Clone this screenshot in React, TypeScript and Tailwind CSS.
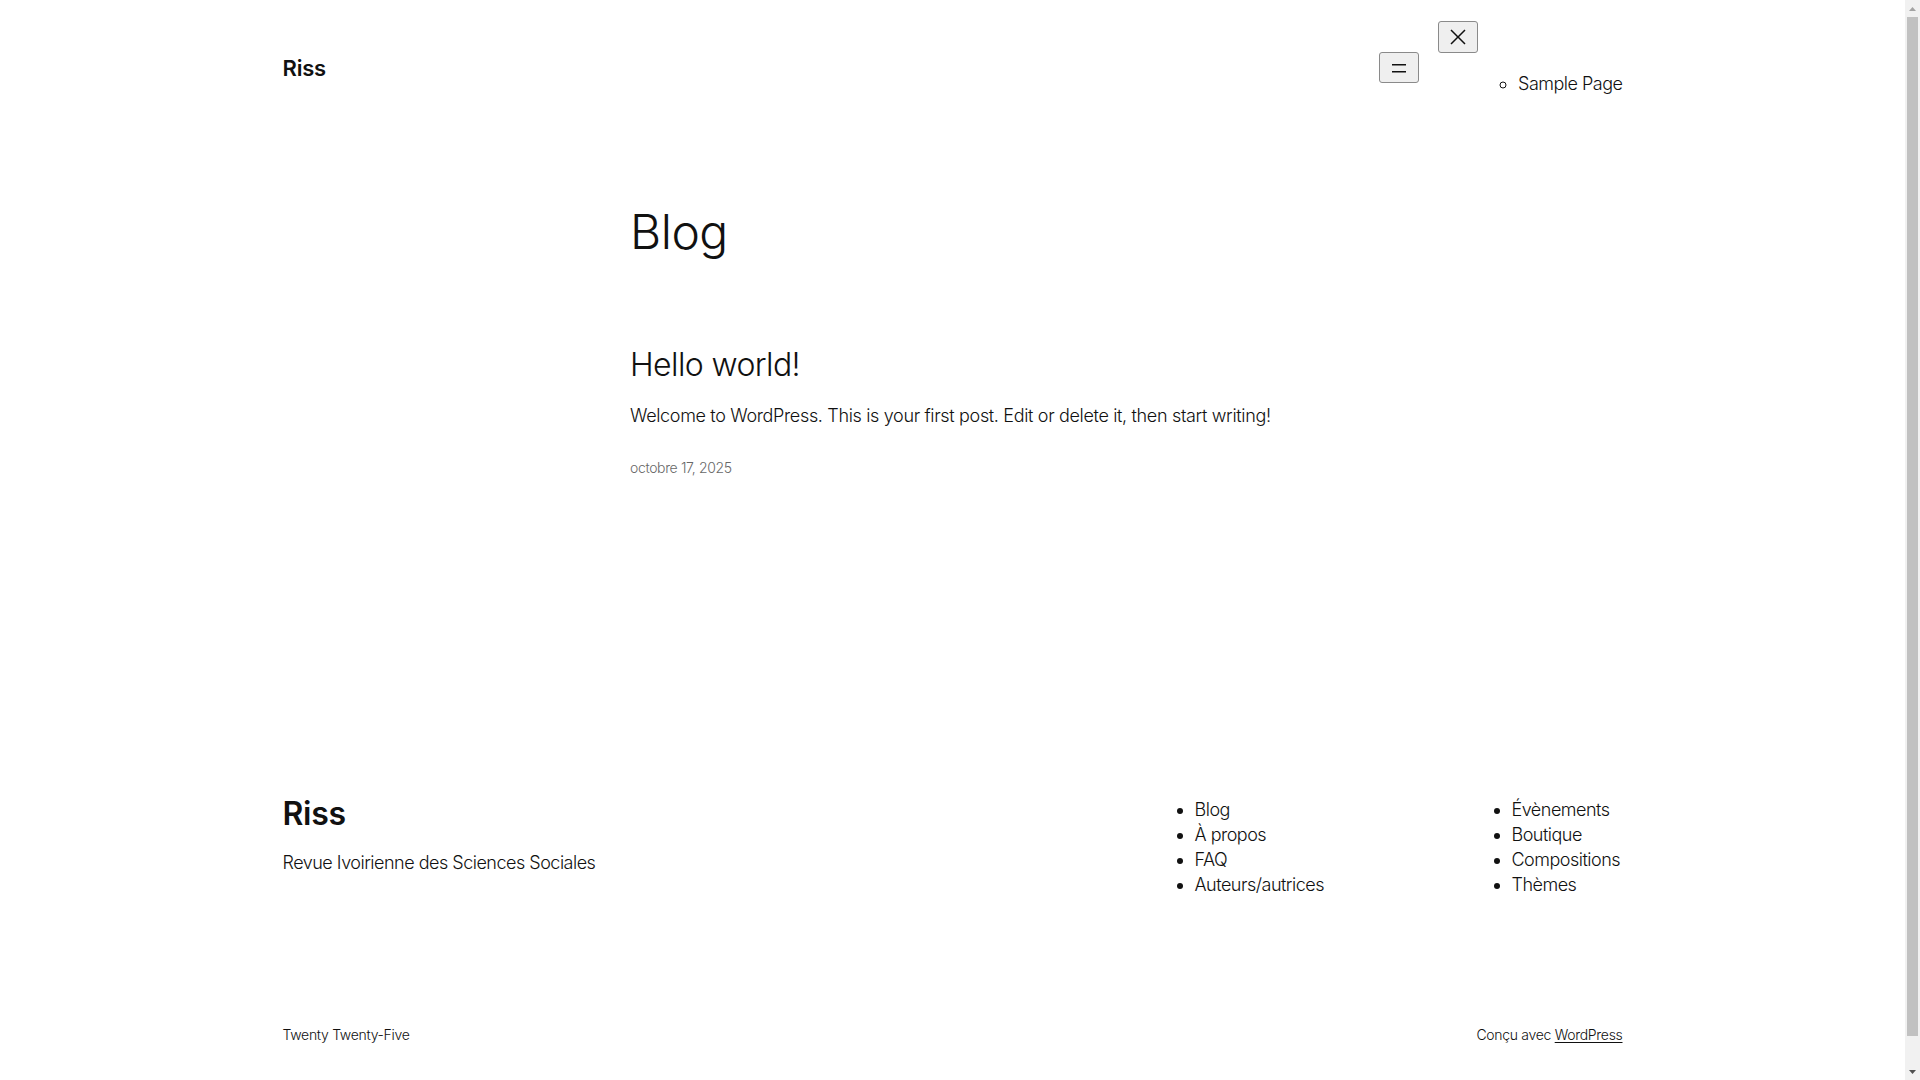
import React from "react";

function MenuIcon() {
  return (
    <svg width="24" height="24" viewBox="0 0 24 24" aria-hidden="true">
      <path d="M5 15h14v1.5H5zm0-7h14v1.5H5z" fill="currentColor" />
    </svg>
  );
}

function CloseIcon() {
  return (
    <svg width="24" height="24" viewBox="0 0 24 24" aria-hidden="true">
      <path
        d="m13.06 12 6.47-6.47-1.06-1.06L12 10.94 5.53 4.47 4.47 5.53 10.94 12l-6.47 6.47 1.06 1.06L12 13.06l6.47 6.47 1.06-1.06L13.06 12Z"
        fill="currentColor"
      />
    </svg>
  );
}

// the browser's classic scrollbar, as seen in the screenshot
function ScrollBar() {
  return (
    <div className="fixed top-0 right-0 h-screen w-[15px] bg-[#f1f1f1] flex flex-col">
      <div className="h-[17px] flex items-center justify-center">
        <svg width="7" height="4" viewBox="0 0 7 4" aria-hidden="true">
          <path d="M3.5 0 7 4H0z" fill="#a3a3a3" />
        </svg>
      </div>
      <div className="flex-1 px-[2px]">
        <div className="h-[1019px] bg-[#c1c1c1]" />
      </div>
      <div className="h-[17px] flex items-center justify-center">
        <svg width="7" height="4" viewBox="0 0 7 4" aria-hidden="true">
          <path d="M0 0h7L3.5 4z" fill="#505050" />
        </svg>
      </div>
    </div>
  );
}

const leftMenu = ["Blog", "À propos", "FAQ", "Auteurs/autrices"];
const rightMenu = ["Évènements", "Boutique", "Compositions", "Thèmes"];

export default function App() {
  return (
    <div className="min-h-[1109px] pr-[15px] bg-white text-[#111111] font-['Inter','Liberation_Sans',sans-serif]">
      {/* header */}
      <header className="max-w-[1340px] mx-auto pt-[21px] flex justify-between items-center">
        <a href="#" className="text-[22px] leading-[30px] font-semibold tracking-[-0.2px]">
          Riss
        </a>
        <nav className="flex items-center gap-[19px]">
          <button
            aria-label="Ouvrir le menu"
            className="w-[40px] h-[31px] flex items-center justify-center bg-[#efefef] border border-[#8a8a8a] rounded-[3px] text-[#111]"
          >
            <MenuIcon />
          </button>
          <div className="flex flex-col items-start">
            <button
              aria-label="Fermer le menu"
              className="w-[40px] h-[32px] flex items-center justify-center bg-[#efefef] border border-[#8a8a8a] rounded-[3px] text-[#111]"
            >
              <CloseIcon />
            </button>
            <ul className="my-[18px] ml-10 pl-10 list-[circle] text-[18px] leading-[25px] font-light tracking-[-0.5px]">
              <li>
                <a href="#">Sample Page</a>
              </li>
            </ul>
          </div>
        </nav>
      </header>

      {/* main */}
      <main className="w-[645px] mx-auto">
        <h1 className="mt-[94px] text-[48px] leading-[48px] font-light tracking-[-0.5px]">Blog</h1>
        <h2 className="mt-[90px] text-[32px] leading-[38px] font-light tracking-[-0.6px]">
          <a href="#">Hello world!</a>
        </h2>
        <p className="mt-[19px] text-[18px] leading-[25px] font-light tracking-[-0.34px]">
          Welcome to WordPress. This is your first post. Edit or delete it, then start writing!
        </p>
        <p className="mt-[30px] text-[14px] leading-[20px] font-light text-[#686868] tracking-[-0.35px]">
          octobre 17, 2025
        </p>
      </main>

      {/* footer */}
      <footer className="max-w-[1340px] mx-auto mt-[317px] pb-[64px]">
        <div className="flex justify-between items-start">
          <div className="flex flex-col">
            <a href="#" className="text-[32px] leading-[38px] font-semibold tracking-[-0.3px]">
              Riss
            </a>
            <p className="mt-[17px] text-[18px] leading-[25px] font-light tracking-[-0.5px]">
              Revue Ivoirienne des Sciences Sociales
            </p>
          </div>
          <div className="mt-[2px] flex gap-[163px] text-[18px] leading-[25px] font-light tracking-[-0.5px]">
            <ul className="w-[154px] list-disc pl-[18px] whitespace-nowrap">
              {leftMenu.map((item) => (
                <li key={item}>
                  <a href="#">{item}</a>
                </li>
              ))}
            </ul>
            <ul className="w-[129px] list-disc pl-[18px] whitespace-nowrap">
              {rightMenu.map((item) => (
                <li key={item}>
                  <a href="#">{item}</a>
                </li>
              ))}
            </ul>
          </div>
        </div>

        <div className="mt-[128px] flex justify-between text-[14px] leading-[20px] font-light tracking-[-0.3px]">
          <p>Twenty Twenty-Five</p>
          <p>
            Conçu avec{" "}
            <a href="#" className="underline underline-offset-2">
              WordPress
            </a>
          </p>
        </div>
      </footer>

      <ScrollBar />
    </div>
  );
}
